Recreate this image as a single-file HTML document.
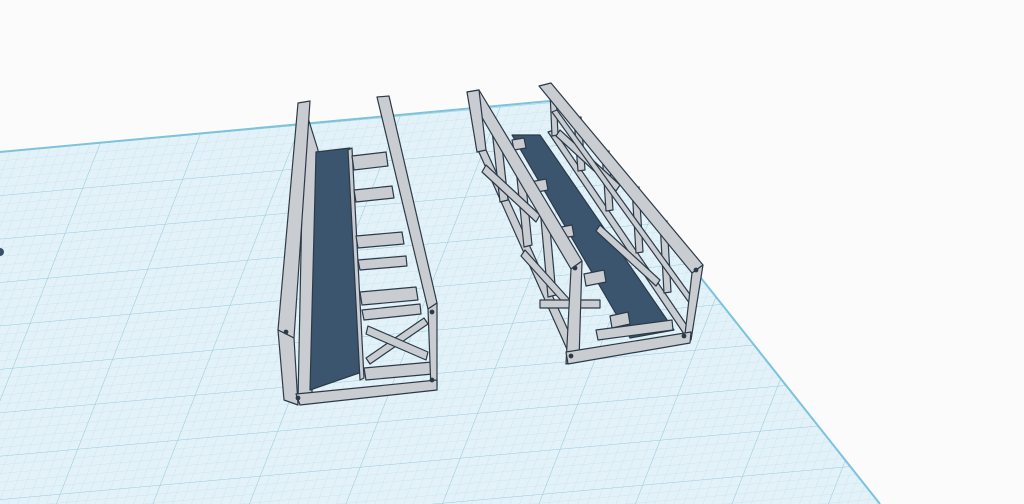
<!DOCTYPE html>
<html><head><meta charset="utf-8"><style>html,body{margin:0;padding:0;background:#fbfbfb;overflow:hidden}svg{display:block}</style></head>
<body>
<svg width="1024" height="504" viewBox="0 0 1024 504" xmlns="http://www.w3.org/2000/svg">
<defs>
<pattern id="minor" width="10" height="10" patternUnits="userSpaceOnUse" patternTransform="matrix(1,-0.09,-0.35,0.9,0,152)">
<path d="M0 0H10M0 0V10" stroke="#bfdfea" stroke-width="0.7" fill="none"/>
</pattern>
<pattern id="major" width="100" height="50" patternUnits="userSpaceOnUse" patternTransform="matrix(1,-0.09,-0.35,0.9,0,152)">
<path d="M0 0H100M0 0V50" stroke="#95cbdf" stroke-width="1.1" fill="none"/>
</pattern>
<clipPath id="pl"><polygon points="0,152 560,100 880,504 0,504"/></clipPath>
</defs>
<rect width="1024" height="504" fill="#fbfbfb"/>
<polygon points="0,152 560,100 880,504 0,504" fill="#e3f2f8"/>
<g clip-path="url(#pl)">
<rect width="1024" height="504" fill="url(#minor)"/>
<rect width="1024" height="504" fill="url(#major)"/>
</g>
<polyline points="0,152 560,100 880,504" fill="none" stroke="#7cc3dc" stroke-width="2"/>
<circle cx="0" cy="252" r="4" fill="#3a5068"/>

<g stroke="#2c3a48" stroke-width="1.2" stroke-linejoin="round">
<!-- Bridge 1 -->
<g fill="#c9ccd0">
<polygon points="304,105 318,150 312,392 298,400"/>
<polygon points="298,103 310,101 294,338 278,330"/>
<polygon points="278,330 294,338 298,405 284,400"/>
</g>
<polygon points="316,152 350,148 362,372 310,390" fill="#3b556f"/>
<g fill="#c9ccd0">
<polygon points="348,150 352,148 364,378 360,380"/>
<polygon points="352,156 386,152 388,166 354,170"/>
<polygon points="354,190 392,186 394,198 356,202"/>
<polygon points="356,236 402,232 404,244 358,248"/>
<polygon points="358,260 406,256 407,266 360,270"/>
<polygon points="360,292 416,287 418,300 362,305"/>
<polygon points="362,310 420,304 421,314 364,320"/>
<polygon points="366,358 424,318 428,324 370,364"/>
<polygon points="368,326 428,352 426,360 366,334"/>
<polygon points="364,368 432,362 433,374 366,380"/>
<polygon points="377,97 389,96 437,303 428,309"/>
<polygon points="428,309 437,303 437,386 431,390"/>
<polygon points="296,394 437,380 437,390 300,405"/>
</g>
<circle cx="286" cy="332" r="1.8" fill="#2c3a48"/><circle cx="298" cy="398" r="1.8" fill="#2c3a48"/><circle cx="432" cy="312" r="1.8" fill="#2c3a48"/><circle cx="432" cy="380" r="1.8" fill="#2c3a48"/>

<!-- Bridge 2 -->
<polygon points="512,135 540,135 674,330 630,338" fill="#3b556f"/>
<g fill="#c9ccd0">
<polygon points="548,132 554,130 690,330 684,334"/>
<polygon points="550,92 556,92 558,135 552,136"/>
<polygon points="574,118 581,117 585,170 578,171"/>
<polygon points="602,152 609,151 613,210 606,211"/>
<polygon points="632,188 639,187 643,252 636,253"/>
<polygon points="660,222 667,221 671,292 664,293"/>
<polygon points="560,130 620,185 616,191 556,136"/>
<polygon points="600,225 660,280 656,286 596,231"/>
<polygon points="552,112 557,110 694,300 690,304"/>
<polygon points="539,86 551,83 703,265 692,273"/>
<polygon points="692,273 703,265 691,340 684,343"/>
<polygon points="512,140 524,138 526,148 514,150"/>
<polygon points="530,182 546,179 548,190 532,193"/>
<polygon points="556,228 572,225 574,236 558,239"/>
<polygon points="584,274 604,270 606,282 586,286"/>
<polygon points="610,316 628,312 630,324 612,328"/>
<polygon points="596,330 672,320 673,330 598,340"/>
<polygon points="478,150 486,150 578,352 570,356"/>
<polygon points="492,130 500,128 508,200 500,202"/>
<polygon points="516,168 524,166 532,245 524,247"/>
<polygon points="540,208 548,206 556,295 548,297"/>
<polygon points="486,165 540,215 536,222 482,172"/>
<polygon points="525,250 570,300 566,306 521,256"/>
<polygon points="540,300 600,300 600,308 540,308"/>
<polygon points="467,92 479,90 582,261 571,269"/>
<polygon points="467,92 479,90 486,150 477,152"/>
<polygon points="571,269 582,261 579,360 566,364"/>
<polygon points="566,352 691,332 690,343 568,364"/>
</g>
<circle cx="575" cy="268" r="1.8" fill="#2c3a48"/><circle cx="571" cy="356" r="1.8" fill="#2c3a48"/><circle cx="696" cy="270" r="1.8" fill="#2c3a48"/><circle cx="684" cy="336" r="1.8" fill="#2c3a48"/>
</g>
</svg>
</body></html>
